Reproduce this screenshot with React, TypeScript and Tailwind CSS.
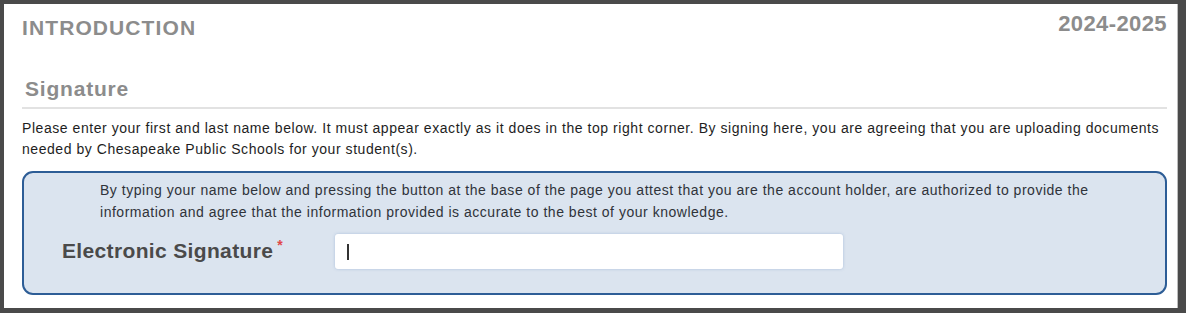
import React from 'react';

export default function App() {
  return (
    <div className="w-[1186px] h-[313px] bg-[#4a4a4a] pt-[4px] pl-[4px] pr-[8px] pb-[5px]" style={{ fontFamily: '"Liberation Sans", Arial, sans-serif' }}>
      <div className="h-full bg-white border-r border-[#bdbdbd] pl-[18px] pr-[10px] pt-[8px]">
        <div className="flex justify-between items-start">
          <h1 className="text-[21px] font-bold text-[#8c8c8c] mt-[2px] leading-[28px] tracking-[1.1px]">INTRODUCTION</h1>
          <span className="text-[22px] font-bold text-[#8c8c8c] leading-[26px] tracking-[0.4px] mt-[-1px]">2024-2025</span>
        </div>

        <h2 className="mt-[35px] ml-[3px] text-[21px] font-bold text-[#8c8c8c] leading-[24px] tracking-[0.8px]">Signature</h2>
        <div className="mt-[6px] border-b-2 border-[#e2e2e2]" />

        <p className="mt-[9px] text-[14px] leading-[21px] text-[#1e1e1e] tracking-[0.55px]">
          Please enter your first and last name below. It must appear exactly as it does in the top right corner. By signing here, you are agreeing that you are uploading documents needed by Chesapeake Public Schools for your student(s).
        </p>

        <div className="mt-[11px] h-[124px] rounded-[11px] border-2 border-[#2d5d96] bg-[#dbe4ef] pt-[6px]">
          <p className="pl-[76px] pr-[20px] text-[14px] leading-[22px] text-[#2f333a] tracking-[0.52px]">
            By typing your name below and pressing the button at the base of the page you attest that you are the account holder, are authorized to provide the information and agree that the information provided is accurate to the best of your knowledge.
          </p>
          <div className="flex items-start mt-[11px]">
            <label className="ml-[38px] w-[273px] text-[21px] font-bold text-[#4a4a4a] leading-[24px] mt-[5px] tracking-[0.35px]">
              Electronic Signature
              <span className="text-[#e04848] text-[14px] align-top ml-[4px] relative top-[-6px]">*</span>
            </label>
            <div className="w-[508px] h-[35px] bg-white rounded-[3px] shadow-[0_0_3px_rgba(80,120,180,0.35)] flex items-center pl-[12px]">
              <span className="w-[2px] h-[16px] bg-[#333]" />
            </div>
          </div>
        </div>
      </div>
    </div>
  );
}
